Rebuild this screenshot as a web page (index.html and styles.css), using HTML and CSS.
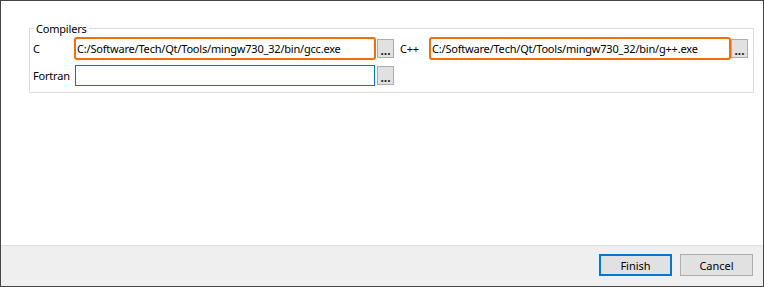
FILE: index.html
```html
<!DOCTYPE html>
<html lang="en">
<head>
    <meta charset="UTF-8">
    <title>Compilers</title>
    <link rel="stylesheet" href="styles.css">
</head>
<body>
    <div class="window">
        <div class="content">
            <fieldset class="group">
                <legend>Compilers</legend>
                <div class="grid">
                    <label class="lbl">C</label>
                    <input class="path hot" type="text" value="C:/Software/Tech/Qt/Tools/mingw730_32/bin/gcc.exe">
                    <button class="browse">...</button>
                    <label class="lbl">C++</label>
                    <input class="path hot" type="text" value="C:/Software/Tech/Qt/Tools/mingw730_32/bin/g++.exe">
                    <button class="browse last">...</button>

                    <label class="lbl">Fortran</label>
                    <input class="path focus" type="text" value="">
                    <button class="browse">...</button>
                </div>
            </fieldset>
        </div>
        <div class="footer">
            <button class="btn default">Finish</button>
            <button class="btn">Cancel</button>
        </div>
    </div>
</body>
</html>
```

FILE: styles.css
```css
* {
    box-sizing: border-box;
}

body {
    margin: 0;
    font-family: "Noto Sans", "Open Sans", sans-serif;
    font-size: 11px;
    letter-spacing: -0.2px;
    color: #000;
    background: #fff;
}

.window {
    width: 764px;
    height: 287px;
    border: 1px solid #454545;
    display: flex;
    flex-direction: column;
}

.content {
    height: 244px;
    background: #fff;
    padding: 20px 9px 0 28px;
}

.group {
    margin: 0;
    padding: 2px 5px 6px 3px;
    border: 1px solid #dcdcdc;
}

.group legend {
    padding: 0 2px;
    margin-left: 1px;
    line-height: 15px;
}

.grid {
    display: grid;
    grid-template-columns: 42px 300px 25px 30px 1fr 18px;
    row-gap: 6px;
    align-items: center;
}

.lbl {
    line-height: 21px;
}

.path {
    height: 21px;
    width: 100%;
    margin: 0;
    padding: 0 1px;
    border: 1px solid #7a7a7a;
    font-family: inherit;
    font-size: 11px;
    letter-spacing: -0.2px;
    color: #000;
    background: #fff;
    outline: none;
}

.path.hot {
    height: 23px;
    margin: -1px 0;
    width: calc(100% + 2px);
    margin-left: -1px;
    border: 2px solid #f26d0c;
    border-radius: 3px;
    padding-left: 1px;
}

.path.focus {
    border-color: #0078d7;
}

.browse {
    width: 17px;
    height: 19px;
    margin: 0 0 0 2px;
    padding: 0;
    border: 1px solid #adadad;
    background: #e1e1e1;
    font-family: inherit;
    font-size: 12px;
    font-weight: bold;
    letter-spacing: 0;
    line-height: 22px;
    color: #1a1a1a;
}

.browse.last {
    margin-left: 1px;
}

.footer {
    flex: 1;
    border-top: 1px solid #dfdfdf;
    background: #efefef;
    display: flex;
    justify-content: flex-end;
    gap: 8px;
    padding: 8px 10px 0 0;
}

.btn {
    width: 73px;
    height: 22px;
    margin: 0;
    padding: 0;
    border: 1px solid #adadad;
    background: #e1e1e1;
    font-family: inherit;
    font-size: 11px;
    color: #000;
}

.btn.default {
    border: 2px solid #0078d7;
}
```
